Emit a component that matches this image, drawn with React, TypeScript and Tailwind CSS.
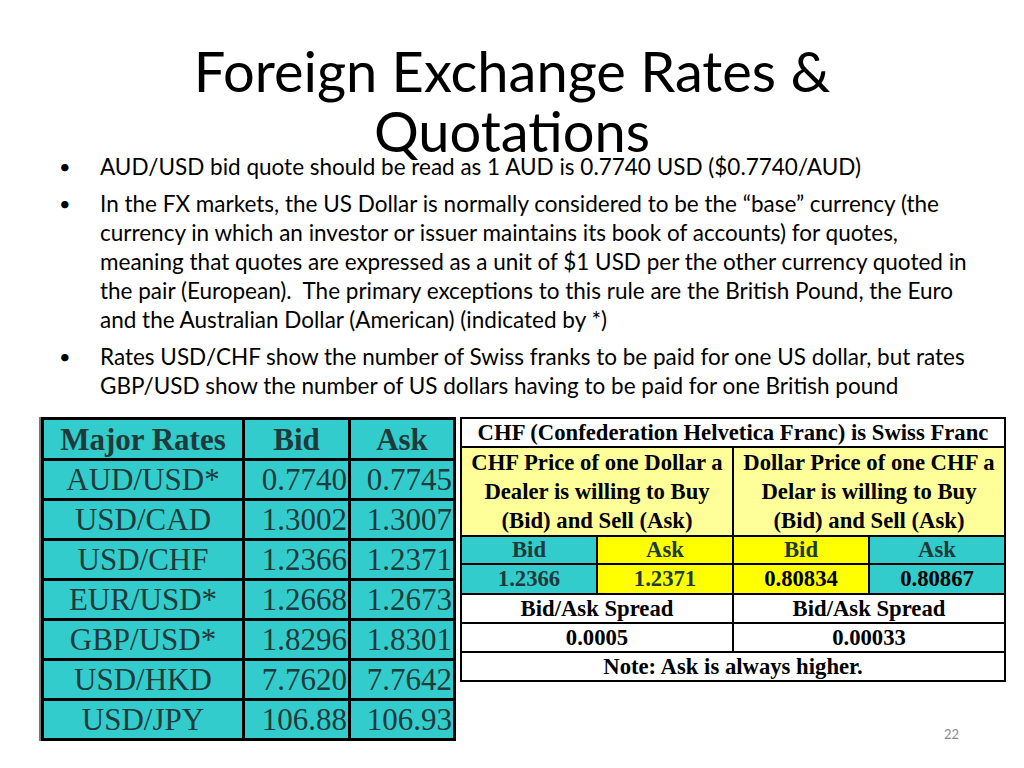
import React from 'react'

const majorRates = [
    ['AUD/USD*', '0.7740', '0.7745'],
    ['USD/CAD', '1.3002', '1.3007'],
    ['USD/CHF', '1.2366', '1.2371'],
    ['EUR/USD*', '1.2668', '1.2673'],
    ['GBP/USD*', '1.8296', '1.8301'],
    ['USD/HKD', '7.7620', '7.7642'],
    ['USD/JPY', '106.88', '106.93'],
]

const serif = { fontFamily: '"Liberation Serif", "Times New Roman", serif' }

const MajorRates = () => (
    <table className="w-[415px] table-fixed border-collapse border-[3px] border-black bg-[#33cccc] text-[#1e3a3a] text-[31px] leading-none shadow-[-2px_0_0_#777]" style={serif}>
        <tbody>
            <tr className="h-[41px]">
                <th className="w-[201px] border-[3px] border-black font-bold">Major Rates</th>
                <th className="w-[106px] border-[3px] border-black font-bold">Bid</th>
                <th className="border-[3px] border-black font-bold">Ask</th>
            </tr>
            {majorRates.map(([pair, bid, ask]) => (
                <tr key={pair} className="h-[40px]">
                    <td className="border-[3px] border-black text-center">{pair}</td>
                    <td className="border-[3px] border-black text-right pr-[1px]">{bid}</td>
                    <td className="border-[3px] border-black text-right pr-[1px]">{ask}</td>
                </tr>
            ))}
        </tbody>
    </table>
)

const cell = 'border-2 border-black text-center px-0'

const SwissFranc = () => (
    <table className="w-[546px] border-collapse border-2 border-black text-[22.7px] leading-[26px] font-bold text-black table-fixed" style={serif}>
        <tbody>
            <tr className="h-[29px] bg-white">
                <td colSpan={4} className={cell}>CHF (Confederation Helvetica Franc) is Swiss Franc</td>
            </tr>
            <tr className="bg-[#ffff99] h-[87px]">
                <td colSpan={2} className={`${cell} leading-[29px]`}>
                    CHF Price of one Dollar a<br />Dealer is willing to Buy<br />(Bid) and Sell (Ask)
                </td>
                <td colSpan={2} className={`${cell} leading-[29px]`}>
                    Dollar Price of one CHF a<br />Delar is willing to Buy<br />(Bid) and Sell (Ask)
                </td>
            </tr>
            <tr className="h-[28px] leading-[22px]">
                <td className={`${cell} bg-[#33cccc] text-[#1e3a3a]`}>Bid</td>
                <td className={`${cell} bg-[#ffff00] text-[#1e3a3a]`}>Ask</td>
                <td className={`${cell} bg-[#ffff00] text-[#1e3a3a]`}>Bid</td>
                <td className={`${cell} bg-[#33cccc] text-[#1e3a3a]`}>Ask</td>
            </tr>
            <tr className="h-[30px] leading-[24px]">
                <td className={`${cell} bg-[#33cccc] text-[#1e3a3a]`}>1.2366</td>
                <td className={`${cell} bg-[#ffff00] text-[#1e3a3a]`}>1.2371</td>
                <td className={`${cell} bg-[#ffff00]`}>0.80834</td>
                <td className={`${cell} bg-[#33cccc]`}>0.80867</td>
            </tr>
            <tr className="h-[29px] bg-white">
                <td colSpan={2} className={cell}>Bid/Ask Spread</td>
                <td colSpan={2} className={cell}>Bid/Ask Spread</td>
            </tr>
            <tr className="h-[29px] bg-white">
                <td colSpan={2} className={cell}>0.0005</td>
                <td colSpan={2} className={cell}>0.00033</td>
            </tr>
            <tr className="h-[29px] bg-white">
                <td colSpan={4} className={cell}>Note: Ask is always higher.</td>
            </tr>
        </tbody>
    </table>
)

const Bullet = ({ children }: { children: React.ReactNode }) => (
    <li className="flex">
        <span className="w-[41px] shrink-0 text-[20px]">•</span>
        <span>{children}</span>
    </li>
)

export default function App() {
    return (
        <div className="w-[1024px] h-[768px] bg-white relative overflow-hidden" style={{ fontFamily: 'Lato, "Open Sans", sans-serif' }}>
            <h1 className="pt-[41px] text-center text-[56px] leading-[60px] text-black font-normal">
                Foreign Exchange Rates &amp;
                <br />
                Quotations
            </h1>
            <ul className="-mt-[9px] ml-[59px] w-[945px] text-[22.5px] leading-[29px] text-black space-y-[8px] relative">
                <Bullet>AUD/USD bid quote should be read as 1 AUD is 0.7740 USD ($0.7740/AUD)</Bullet>
                <Bullet>
                    In the FX markets, the US Dollar is normally considered to be the “base” currency (the
                    <br />
                    currency in which an investor or issuer maintains its book of accounts) for quotes,
                    <br />
                    meaning that quotes are expressed as a unit of $1 USD per the other currency quoted in
                    <br />
                    the pair (European).&nbsp; The primary exceptions to this rule are the British Pound, the Euro
                    <br />
                    and the Australian Dollar (American) (indicated by *)
                </Bullet>
                <Bullet>
                    Rates USD/CHF show the number of Swiss franks to be paid for one US dollar, but rates
                    <br />
                    GBP/USD show the number of US dollars having to be paid for one British pound
                </Bullet>
            </ul>
            <div className="flex items-start gap-[4px] ml-[41px] mt-[17px]">
                <MajorRates />
                <SwissFranc />
            </div>
            <div className="absolute left-[944px] top-[725px] text-[13px] text-[#8a8a8a]">22</div>
        </div>
    )
}
